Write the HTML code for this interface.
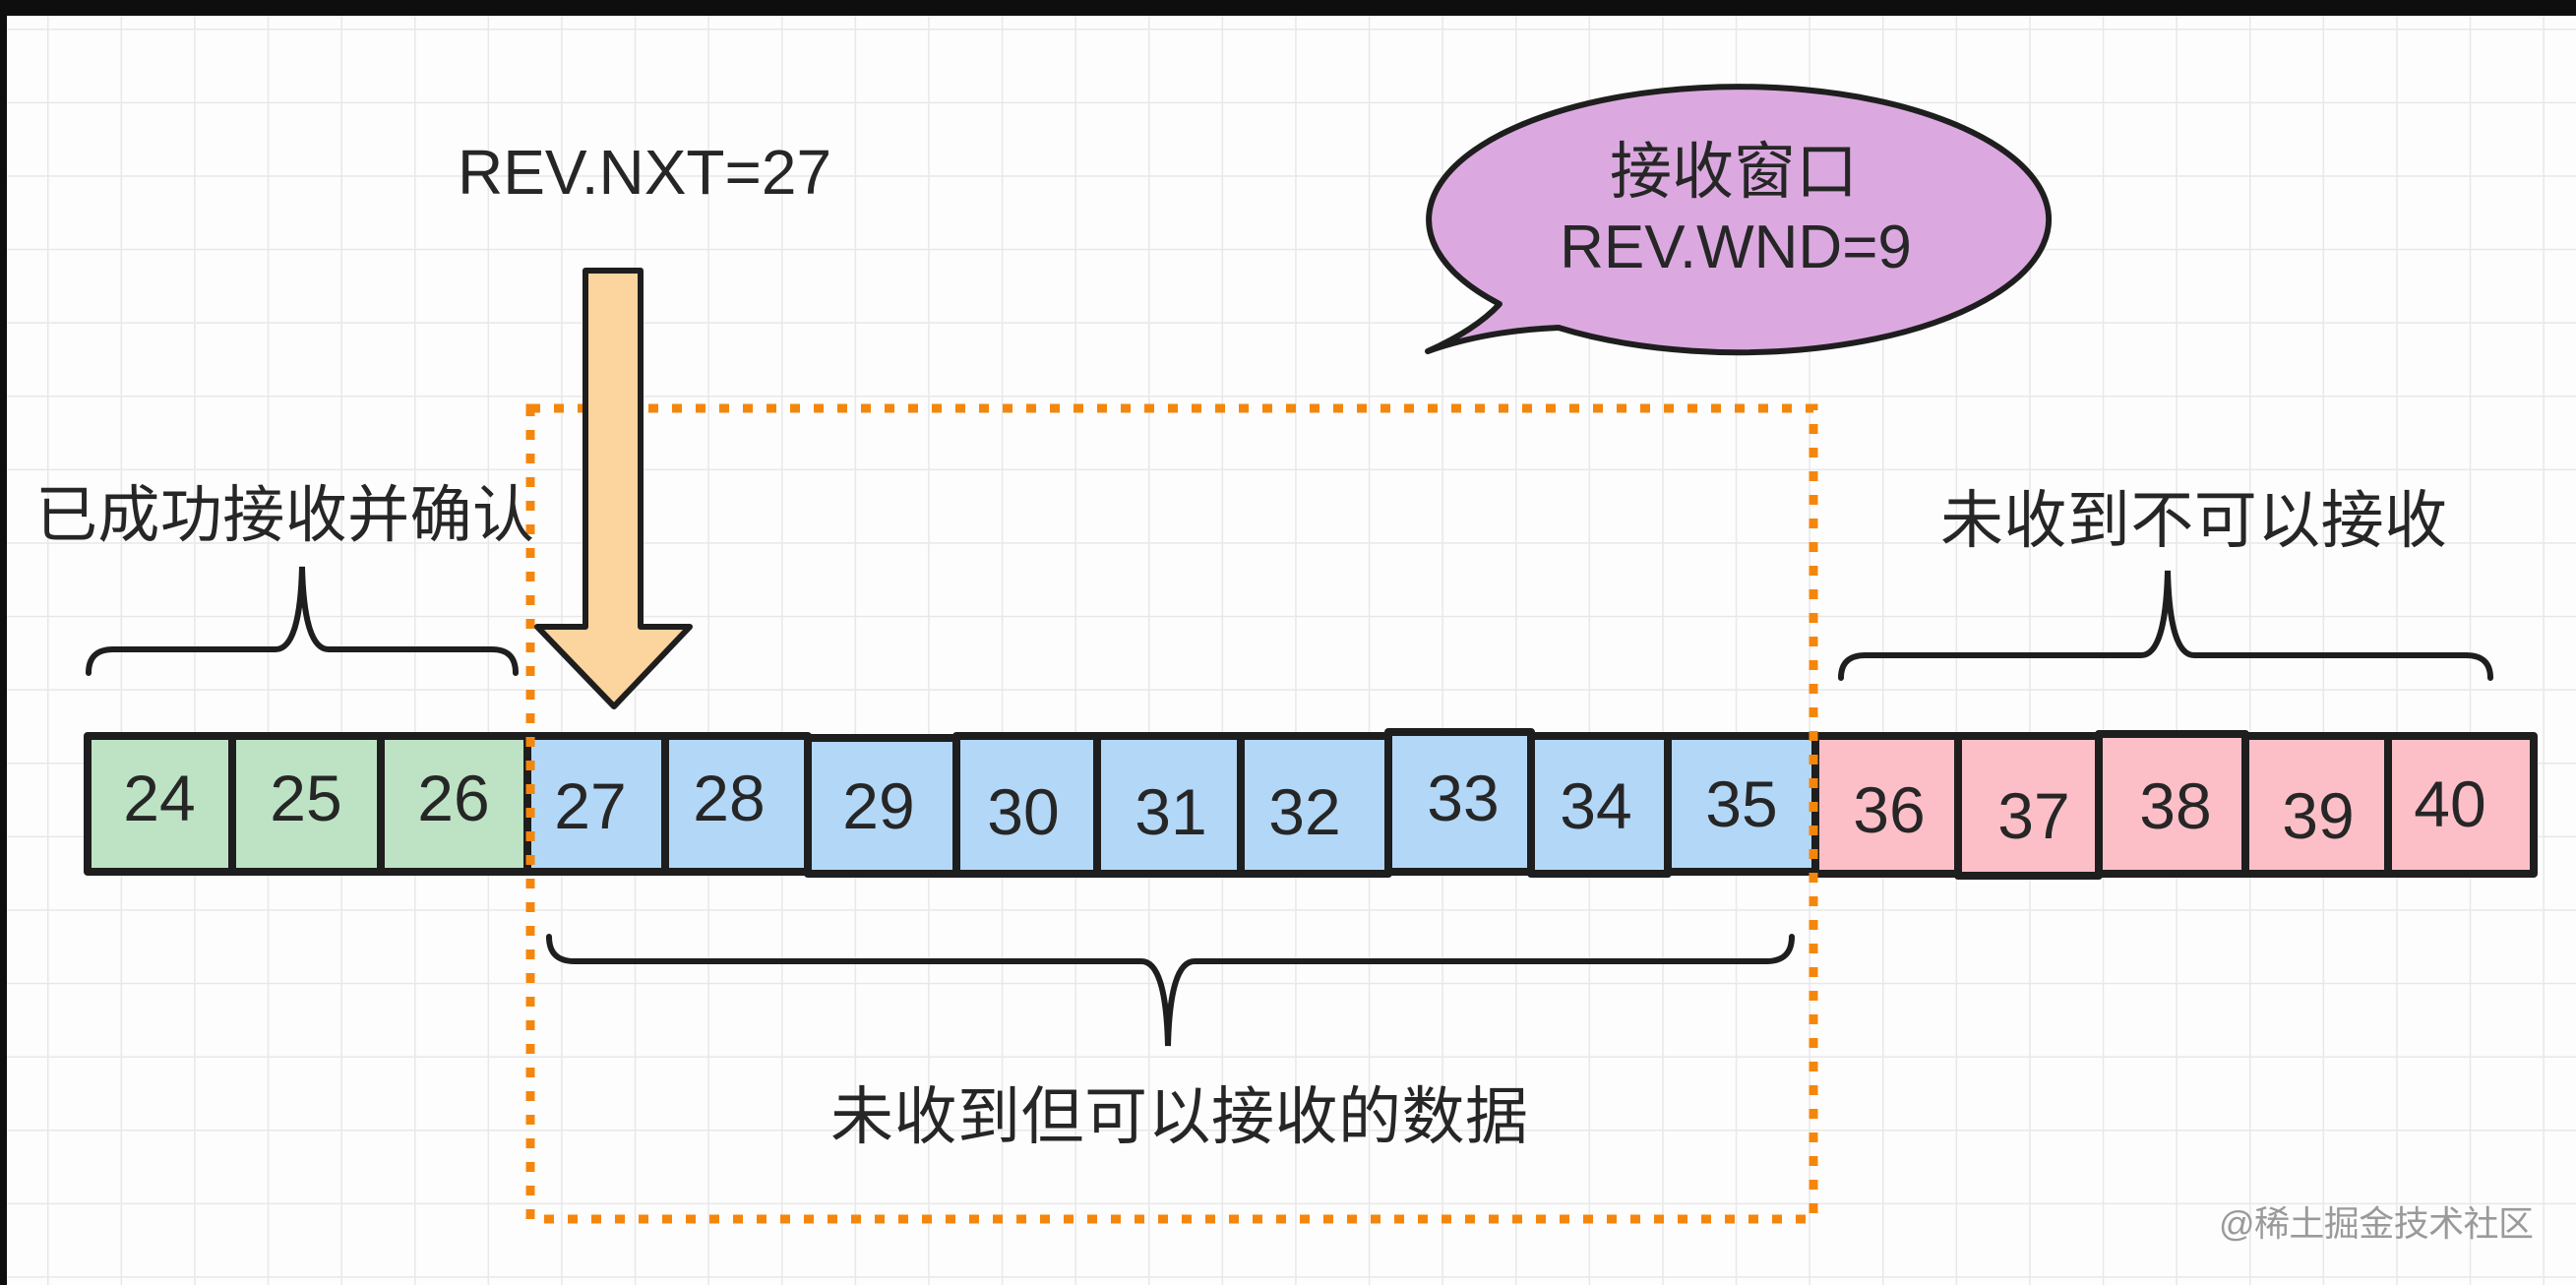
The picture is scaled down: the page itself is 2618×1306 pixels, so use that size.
<!DOCTYPE html>
<html><head><meta charset="utf-8">
<style>
html,body{margin:0;padding:0;background:#0e0e0e;}
svg{display:block;}
text{font-family:"Liberation Sans","Noto Sans CJK SC",sans-serif;fill:#262626;}
</style></head>
<body>
<svg width="2618" height="1306" viewBox="0 0 2618 1306" xmlns="http://www.w3.org/2000/svg">
<defs>
<pattern id="g" x="48" y="29" width="74.6" height="74.6" patternUnits="userSpaceOnUse">
<path d="M0 0V74.6M0 0H74.6" stroke="#e8e8e8" stroke-width="3" fill="none"/>
</pattern>
</defs>
<rect x="0" y="0" width="2618" height="1306" fill="#0e0e0e"/>
<rect x="7" y="16" width="2611" height="1290" fill="#fdfdfd"/>
<rect x="7" y="16" width="2611" height="1290" fill="url(#g)"/>

<!-- boxes -->
<g stroke="#1e1e1e" stroke-width="8" stroke-linejoin="round">
<rect x="89" y="748" width="147" height="138" fill="#bde3c4"/>
<rect x="236" y="748" width="151" height="138" fill="#bde3c4"/>
<rect x="387" y="748" width="149" height="138" fill="#bde3c4"/>
<rect x="536" y="748" width="140" height="138" fill="#b3d7f7"/>
<rect x="676" y="748" width="145" height="138" fill="#b3d7f7"/>
<rect x="821" y="750" width="151" height="138" fill="#b3d7f7"/>
<rect x="972" y="748" width="143" height="140" fill="#b3d7f7"/>
<rect x="1115" y="748" width="146" height="140" fill="#b3d7f7"/>
<rect x="1261" y="748" width="150" height="140" fill="#b3d7f7"/>
<rect x="1411" y="744" width="145" height="142" fill="#b3d7f7"/>
<rect x="1556" y="748" width="139" height="140" fill="#b3d7f7"/>
<rect x="1695" y="748" width="150" height="138" fill="#b3d7f7"/>
<rect x="1845" y="748" width="145" height="140" fill="#fcbfc8"/>
<rect x="1990" y="748" width="143" height="142" fill="#fcbfc8"/>
<rect x="2133" y="746" width="149" height="142" fill="#fcbfc8"/>
<rect x="2282" y="748" width="145" height="140" fill="#fcbfc8"/>
<rect x="2427" y="748" width="148" height="140" fill="#fcbfc8"/>
</g>
<g font-size="66" text-anchor="middle">
<text x="162" y="834">24</text>
<text x="311" y="834">25</text>
<text x="461" y="834">26</text>
<text x="600" y="842">27</text>
<text x="741" y="834">28</text>
<text x="893" y="842">29</text>
<text x="1040" y="848">30</text>
<text x="1190" y="848">31</text>
<text x="1326" y="848">32</text>
<text x="1487" y="834">33</text>
<text x="1622" y="842">34</text>
<text x="1770" y="840">35</text>
<text x="1920" y="846">36</text>
<text x="2067" y="852">37</text>
<text x="2211" y="842">38</text>
<text x="2356" y="852">39</text>
<text x="2490" y="840">40</text>
</g>

<!-- orange dotted window -->
<rect x="539" y="415" width="1304" height="824" fill="none" stroke="#f5860c" stroke-width="9" stroke-dasharray="10 14"/>

<!-- arrow -->
<path d="M595 275 H651 V637 H701 L624 718 L546 637 H595 Z" fill="#fcd49e" stroke="#1e1e1e" stroke-width="6" stroke-linejoin="round"/>
<text x="465" y="197" font-size="64">REV.NXT=27</text>

<!-- brackets -->
<g fill="none" stroke="#1e1e1e" stroke-width="6" stroke-linecap="round">
<path d="M90 684 Q90 660 115 660 H280 Q305 660 307 576 Q309 660 334 660 H500 Q524 660 524 684"/>
<path d="M1871 689 Q1871 666 1896 666 H2176 Q2201 666 2203 580 Q2205 666 2230 666 H2506 Q2531 666 2531 689"/>
<path d="M558 952 Q558 977 584 977 H1160 Q1185 977 1187 1063 Q1189 977 1214 977 H1795 Q1821 977 1821 952"/>
</g>
<text x="36" y="545" font-size="63" textLength="507">已成功接收并确认</text>
<text x="1972" y="551" font-size="64" textLength="515">未收到不可以接收</text>
<text x="844" y="1157" font-size="64" textLength="709">未收到但可以接收的数据</text>

<!-- speech bubble -->
<path d="M1524 309 A315 135 0 1 1 1584 333 Q1510 336 1451 357 Q1500 335 1524 309 Z" fill="#dba9df" stroke="#1e1e1e" stroke-width="6" stroke-linejoin="round"/>
<text x="1762" y="196" font-size="63" text-anchor="middle">接收窗口</text>
<text x="1764" y="272" font-size="62" text-anchor="middle">REV.WND=9</text>

<text x="2255" y="1256" font-size="36" style="fill:#9a9a9a" textLength="320">@稀土掘金技术社区</text>
</svg>
</body></html>
